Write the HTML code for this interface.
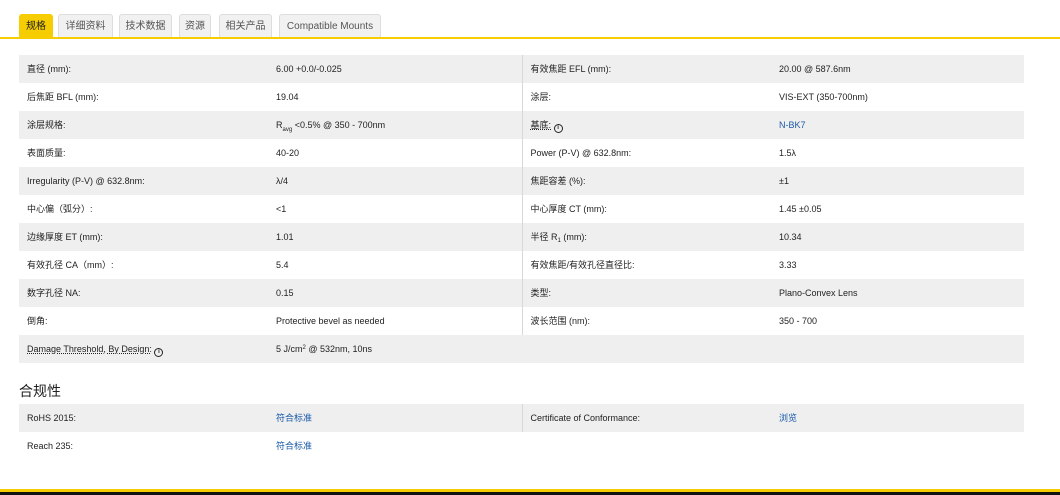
<!DOCTYPE html>
<html><head><meta charset="utf-8"><style>
*{margin:0;padding:0;box-sizing:border-box}
body{width:1060px;height:495px;background:#fff;font-family:"Liberation Sans","Noto Sans CJK SC",sans-serif;color:#222;position:relative;overflow:hidden;font-size:9px}
.tab{position:absolute;top:14px;height:24px;background:#f1f1f1;border:1px solid #ddd;border-bottom:none;border-radius:3px 3px 0 0;color:#555;font-size:10px;line-height:23px;text-align:center}
.tab.a{background:#f5cd00;border-color:#f5cd00;color:#222}
.line{position:absolute;left:0;top:37px;width:1060px;height:2px;background:#f5cd00}
table{position:absolute;left:19px;border-collapse:collapse;width:1005px;table-layout:fixed}
td{height:28px;padding:0 8px;font-size:9px;line-height:12px;vertical-align:middle;color:#222}
td>div{height:12px;line-height:12px;white-space:nowrap}
tr:nth-child(odd) td{background:#efefef}
td.c1{width:249px}td.c2{width:254px}td.c3{width:249px;border-left:1px solid #d8d8d8}
.l{color:#1a5aa8 !important}
.u{text-decoration:underline dotted}
.i{display:inline-block;width:9px;height:9px;border:1.5px solid #222;border-radius:50%;font-size:6px;line-height:6px;text-align:center;font-weight:bold;vertical-align:-1px}
.s{position:relative;font-size:6px;line-height:0}
h3{position:absolute;left:19px;top:381px;font-size:14px;font-weight:normal;color:#222}
</style></head><body>
<div class="tab a" style="left:19px;width:34px">规格</div>
<div class="tab" style="left:58px;width:55px">详细资料</div>
<div class="tab" style="left:119px;width:53px">技术数据</div>
<div class="tab" style="left:179px;width:32px">资源</div>
<div class="tab" style="left:219px;width:53px">相关产品</div>
<div class="tab" style="left:279px;width:102px">Compatible Mounts</div>
<div class="line"></div>
<table style="top:55px">
<tr><td class="c1"><div>直径 (mm):</div></td><td class="c2"><div>6.00 +0.0/-0.025</div></td><td class="c3"><div>有效焦距 EFL (mm):</div></td><td><div>20.00 @ 587.6nm</div></td></tr>
<tr><td class="c1"><div>后焦距 BFL (mm):</div></td><td class="c2"><div>19.04</div></td><td class="c3"><div>涂层:</div></td><td><div>VIS-EXT (350-700nm)</div></td></tr>
<tr><td class="c1"><div>涂层规格:</div></td><td class="c2"><div>R<span class="s" style="top:3px">avg</span> &lt;0.5% @ 350 - 700nm</div></td><td class="c3"><div><span class="u">基底:</span> <span class="i">i</span></div></td><td class="l"><div>N-BK7</div></td></tr>
<tr><td class="c1"><div>表面质量:</div></td><td class="c2"><div>40-20</div></td><td class="c3"><div>Power (P-V) @ 632.8nm:</div></td><td><div>1.5λ</div></td></tr>
<tr><td class="c1"><div>Irregularity (P-V) @ 632.8nm:</div></td><td class="c2"><div>λ/4</div></td><td class="c3"><div>焦距容差 (%):</div></td><td><div>±1</div></td></tr>
<tr><td class="c1"><div>中心偏（弧分）:</div></td><td class="c2"><div>&lt;1</div></td><td class="c3"><div>中心厚度 CT (mm):</div></td><td><div>1.45 ±0.05</div></td></tr>
<tr><td class="c1"><div>边缘厚度 ET (mm):</div></td><td class="c2"><div>1.01</div></td><td class="c3"><div>半径 R<span class="s" style="top:2px">1</span> (mm):</div></td><td><div>10.34</div></td></tr>
<tr><td class="c1"><div>有效孔径 CA（mm）:</div></td><td class="c2"><div>5.4</div></td><td class="c3"><div>有效焦距/有效孔径直径比:</div></td><td><div>3.33</div></td></tr>
<tr><td class="c1"><div>数字孔径 NA:</div></td><td class="c2"><div>0.15</div></td><td class="c3"><div>类型:</div></td><td><div>Plano-Convex Lens</div></td></tr>
<tr><td class="c1"><div>倒角:</div></td><td class="c2"><div>Protective bevel as needed</div></td><td class="c3"><div>波长范围 (nm):</div></td><td><div>350 - 700</div></td></tr>
<tr><td class="c1"><div><span class="u">Damage Threshold, By Design:</span> <span class="i">i</span></div></td><td class="c2"><div>5 J/cm<span class="s" style="top:-3px">2</span> @ 532nm, 10ns</div></td><td></td><td></td></tr>
</table>
<h3>合规性</h3>
<table style="top:404px">
<tr><td class="c1"><div>RoHS 2015:</div></td><td class="c2 l"><div>符合标准</div></td><td class="c3"><div>Certificate of Conformance:</div></td><td class="l"><div>浏览</div></td></tr>
<tr><td class="c1"><div>Reach 235:</div></td><td class="c2 l"><div>符合标准</div></td><td></td><td></td></tr>
</table>
<div style="position:absolute;left:0;top:489px;width:1060px;height:3px;background:#f5cd00"></div>
<div style="position:absolute;left:0;top:492px;width:1060px;height:3px;background:#111"></div>
</body></html>
